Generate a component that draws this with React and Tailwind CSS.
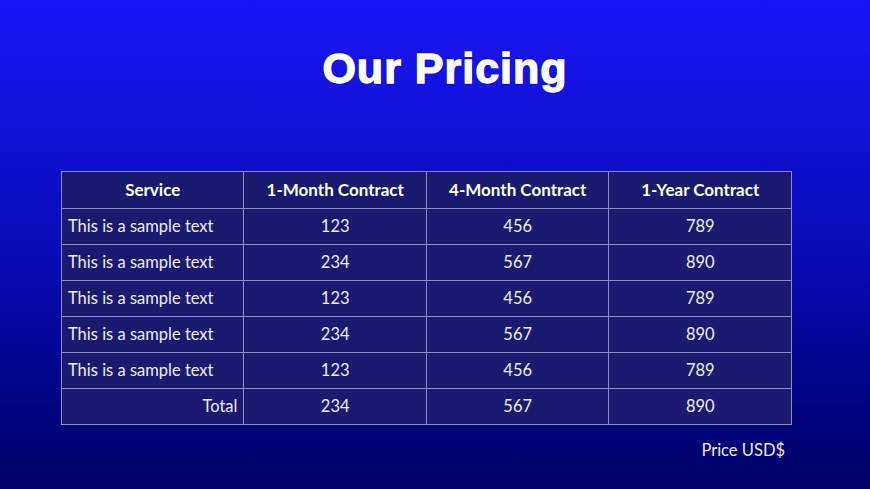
export default function App() {
  const rows = [
    ["This is a sample text", "123", "456", "789"],
    ["This is a sample text", "234", "567", "890"],
    ["This is a sample text", "123", "456", "789"],
    ["This is a sample text", "234", "567", "890"],
    ["This is a sample text", "123", "456", "789"],
  ];
  const headers = ["Service", "1-Month Contract", "4-Month Contract", "1-Year Contract"];
  return (
    <div
      className="w-[870px] h-[489px] overflow-hidden flex flex-col bg-[linear-gradient(180deg,#1b16f6_0%,#0c0cc0_45%,#000068_100%)]"
      style={{ fontFamily: "Lato, 'Open Sans', sans-serif" }}
    >
      <div className="h-[171px] pt-[41px] flex justify-center">
        <h1
          className="text-white text-[43px] leading-[54px] font-black tracking-[1px] pl-[20px] [-webkit-text-stroke:1.3px_white]"
          style={{ fontFamily: "'Liberation Sans', Arial, sans-serif" }}
        >
          Our Pricing
        </h1>
      </div>
      <div className="pl-[61px]">
        <table className="border-collapse w-[731px] text-[16.5px]">
          <thead>
            <tr className="h-[37px]">
              {headers.map((h) => (
                <th
                  key={h}
                  className="w-[183px] border border-[#8e8ccf] bg-[#1c1a6e] text-white font-bold text-[17px] text-center p-0"
                >
                  {h}
                </th>
              ))}
            </tr>
          </thead>
          <tbody>
            {rows.map((r, i) => (
              <tr key={i} className="h-[36px]">
                {r.map((c, j) => (
                  <td
                    key={j}
                    className={`border border-[#8e8ccf] bg-[#1c1a6e] text-[#ececfa] p-0 ${
                      j === 0 ? "text-left pl-[6px]" : "text-center"
                    }`}
                  >
                    {c}
                  </td>
                ))}
              </tr>
            ))}
            <tr className="h-[36px]">
              <td className="border border-[#8e8ccf] bg-[#1c1a6e] text-[#ececfa] text-right pr-[6px] p-0">
                Total
              </td>
              <td className="border border-[#8e8ccf] bg-[#1c1a6e] text-[#ececfa] text-center p-0">234</td>
              <td className="border border-[#8e8ccf] bg-[#1c1a6e] text-[#ececfa] text-center p-0">567</td>
              <td className="border border-[#8e8ccf] bg-[#1c1a6e] text-[#ececfa] text-center p-0">890</td>
            </tr>
          </tbody>
        </table>
      </div>
      <div className="w-[785px] text-right text-[#ececfa] text-[16.5px] mt-[13px]">Price USD$</div>
    </div>
  );
}
